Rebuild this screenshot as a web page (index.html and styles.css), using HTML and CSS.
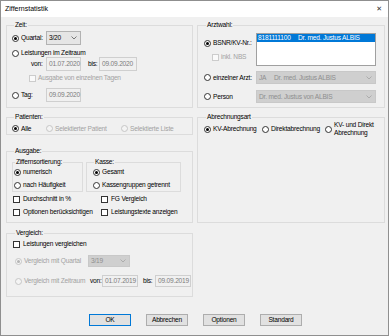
FILE: index.html
```html
<!DOCTYPE html>
<html lang="de">
<head>
    <meta charset="UTF-8">
    <title>Ziffernstatistik</title>
    <link rel="stylesheet" href="styles.css">
</head>
<body>
    <div class="window">
        <div class="titlebar">
            <span class="title">Ziffernstatistik</span>
            <span class="close">✕</span>
        </div>
        <div class="content">
            <div class="panels">
                <!-- Zeit -->
                <fieldset class="group zeit">
                    <legend>Zeit:</legend>
                    <div class="row r-quartal">
                        <span class="radio on"></span>
                        <span class="lbl w-quartal">Quartal:</span>
                        <span class="combo c-quartal">3/20<svg class="chev" width="6" height="4" viewBox="0 0 6 4"><polyline points="0.5,0.5 3,3 5.5,0.5" fill="none" stroke="#6a6a6a" stroke-width="0.9"/></svg></span>
                    </div>
                    <div class="row r-leist">
                        <span class="radio"></span>
                        <span class="lbl">Leistungen im Zeitraum</span>
                    </div>
                    <div class="row r-von">
                        <span class="lbl w-von">von:</span>
                        <span class="field f-von">01.07.2020</span>
                        <span class="lbl w-bis">bis:</span>
                        <span class="field f-bis">09.09.2020</span>
                    </div>
                    <div class="row r-tage">
                        <span class="check off"></span>
                        <span class="lbl dim">Ausgabe von einzelnen Tagen</span>
                    </div>
                    <div class="row r-tag">
                        <span class="radio"></span>
                        <span class="lbl w-quartal">Tag:</span>
                        <span class="field f-von">09.09.2020</span>
                    </div>
                </fieldset>

                <!-- Arztwahl -->
                <fieldset class="group arzt">
                    <legend>Arztwahl:</legend>
                    <div class="arzt-top">
                        <div class="arzt-left">
                            <div class="row r-bsnr">
                                <span class="radio on"></span>
                                <span class="lbl">BSNR/KV-Nr.:</span>
                            </div>
                            <div class="row r-nbs">
                                <span class="check off"></span>
                                <span class="lbl dim">inkl. NBS</span>
                            </div>
                        </div>
                        <div class="listbox">
                            <div class="list-item selected"><span class="nr">8181111100</span>Dr. med. Justus ALBIS</div>
                        </div>
                    </div>
                    <div class="row r-einzel">
                        <span class="radio"></span>
                        <span class="lbl w-arzt">einzelner Arzt:</span>
                        <span class="combo wide off"><span><span class="kz">JA</span>Dr. med. Justus ALBIS</span><svg class="chev" width="6" height="4" viewBox="0 0 6 4"><polyline points="0.5,0.5 3,3 5.5,0.5" fill="none" stroke="#a8a8a8" stroke-width="0.9"/></svg></span>
                    </div>
                    <div class="row r-person">
                        <span class="radio"></span>
                        <span class="lbl w-arzt">Person</span>
                        <span class="combo wide off">Dr. med. Justus von ALBIS<svg class="chev" width="6" height="4" viewBox="0 0 6 4"><polyline points="0.5,0.5 3,3 5.5,0.5" fill="none" stroke="#a8a8a8" stroke-width="0.9"/></svg></span>
                    </div>
                </fieldset>

                <div class="stack">
                    <!-- Patienten -->
                    <fieldset class="group patienten">
                        <legend>Patienten:</legend>
                        <div class="row r-pat">
                            <span class="radio on"></span>
                            <span class="lbl w-alle">Alle</span>
                            <span class="radio off"></span>
                            <span class="lbl dim w-selpat">Selektierter Patient</span>
                            <span class="radio off"></span>
                            <span class="lbl dim">Selektierte Liste</span>
                        </div>
                    </fieldset>

                    <!-- Ausgabe -->
                    <fieldset class="group ausgabe">
                        <legend>Ausgabe:</legend>
                        <div class="sub-row">
                            <fieldset class="group sub sort">
                                <legend>Ziffernsortierung:</legend>
                                <div class="row r-opt">
                                    <span class="radio on"></span>
                                    <span class="lbl">numerisch</span>
                                </div>
                                <div class="row r-opt2">
                                    <span class="radio"></span>
                                    <span class="lbl">nach Häufigkeit</span>
                                </div>
                            </fieldset>
                            <fieldset class="group sub kasse">
                                <legend>Kasse:</legend>
                                <div class="row r-opt">
                                    <span class="radio on"></span>
                                    <span class="lbl">Gesamt</span>
                                </div>
                                <div class="row r-opt2">
                                    <span class="radio"></span>
                                    <span class="lbl">Kassengruppen getrennt</span>
                                </div>
                            </fieldset>
                        </div>
                        <div class="checks">
                            <div class="row"><span class="check"></span><span class="lbl">Durchschnitt in %</span></div>
                            <div class="row"><span class="check"></span><span class="lbl">FG Vergleich</span></div>
                            <div class="row"><span class="check"></span><span class="lbl">Optionen berücksichtigen</span></div>
                            <div class="row"><span class="check"></span><span class="lbl">Leistungstexte anzeigen</span></div>
                        </div>
                    </fieldset>
                </div>

                <!-- Abrechnungsart -->
                <fieldset class="group abrechnung">
                    <legend>Abrechnungsart</legend>
                    <div class="row r-abr">
                        <span class="radio on"></span>
                        <span class="lbl w-kv">KV-Abrechnung</span>
                        <span class="radio"></span>
                        <span class="lbl w-direkt">Direktabrechnung</span>
                        <span class="radio"></span>
                        <span class="lbl two-line">KV- und Direkt<br>Abrechnung</span>
                    </div>
                </fieldset>

                <!-- Vergleich -->
                <fieldset class="group vergleich">
                    <legend>Vergleich:</legend>
                    <div class="row r-vgl">
                        <span class="check"></span>
                        <span class="lbl">Leistungen vergleichen</span>
                    </div>
                    <div class="row r-vquartal">
                        <span class="radio on off"></span>
                        <span class="lbl dim w-vquartal">Vergleich mit Quartal</span>
                        <span class="combo c-vquartal off">3/19<svg class="chev" width="6" height="4" viewBox="0 0 6 4"><polyline points="0.5,0.5 3,3 5.5,0.5" fill="none" stroke="#a8a8a8" stroke-width="0.9"/></svg></span>
                    </div>
                    <div class="row r-vzeit">
                        <span class="radio off"></span>
                        <span class="lbl dim w-vzeit">Vergleich mit Zeitraum</span>
                        <span class="lbl w-vvon">von:</span>
                        <span class="field f-vvon">01.07.2019</span>
                        <span class="lbl w-vbis">bis:</span>
                        <span class="field f-vbis">09.09.2019</span>
                    </div>
                </fieldset>
            </div>

            <div class="buttons">
                <button class="btn default">OK</button>
                <button class="btn">Abbrechen</button>
                <button class="btn">Optionen</button>
                <button class="btn">Standard</button>
            </div>
        </div>
    </div>
</body>
</html>
```

FILE: styles.css
```css
* {
    box-sizing: border-box;
}

body {
    margin: 0;
    background: #ffffff;
    font-family: "Liberation Sans", Arial, sans-serif;
    font-size: 6.6px;
    letter-spacing: -0.2px;
    line-height: 8px;
    color: #000;
}

.window {
    width: 389px;
    height: 336px;
    border: 1px solid #8f8f8f;
    background: #f0f0f0;
    display: flex;
    flex-direction: column;
}

.titlebar {
    height: 16px;
    background: #fff;
    display: flex;
    align-items: center;
    justify-content: space-between;
    padding: 0 6px 0 4px;
}

.title {
    font-size: 7px;
    letter-spacing: 0;
}

.close {
    font-family: "DejaVu Sans", sans-serif;
    font-size: 7px;
    color: #333;
}

.content {
    flex: 1;
    padding: 4px 3px 0 5px;
}

.panels {
    display: grid;
    grid-template-columns: 187px 188px;
    column-gap: 4px;
    row-gap: 5px;
}

/* group boxes */
.group {
    margin: 0;
    padding: 0;
    border: 1px solid #dcdcdc;
    min-width: 0;
}

.group legend {
    padding: 0 1px;
    margin-left: 2px;
    line-height: 8px;
}

.row {
    display: flex;
    align-items: center;
    height: 8px;
    white-space: nowrap;
}

.lbl {
    margin-left: 2px;
}

.dim {
    color: #a2a2a2;
}

/* radio + check */
.radio {
    width: 7px;
    height: 7px;
    border: 1px solid #333;
    border-radius: 50%;
    background: #fff;
    flex: none;
    display: flex;
    align-items: center;
    justify-content: center;
}

.radio.on::after {
    content: "";
    width: 3px;
    height: 3px;
    border-radius: 50%;
    background: #000;
}

.radio.off {
    border-color: #c6c6c6;
    background: #f4f4f4;
}

.radio.on.off::after {
    background: #b4b4b4;
}

.check {
    width: 7px;
    height: 7px;
    border: 1px solid #333;
    background: #fff;
    flex: none;
}

.check.off {
    border-color: #cccccc;
    background: #fafafa;
}

/* inputs */
.field {
    height: 14px;
    border: 1px solid #cfcfcf;
    background: #f0f0f0;
    color: #7c7c7c;
    display: flex;
    align-items: center;
    padding-left: 2px;
    flex: none;
}

.combo {
    height: 14px;
    border: 1px solid #b2b2b2;
    background: #e5e5e5;
    display: flex;
    align-items: center;
    justify-content: space-between;
    padding: 0 3px 0 2px;
    flex: none;
}

.combo.off {
    border-color: #c8c8c8;
    background: #cfcfcf;
    color: #8e8e8e;
}

/* Zeit */
.zeit {
    padding: 2px 0 5px 5px;
}

.r-quartal,
.r-von,
.r-tag {
    height: 14px;
}

.w-quartal {
    width: 25px;
}

.c-quartal {
    width: 35px;
}

.r-leist {
    margin-top: 4px;
}

.r-von {
    padding-left: 19px;
}

.w-von {
    margin-left: 0;
    width: 15px;
}

.f-von {
    width: 35px;
}

.w-bis {
    margin-left: 7px;
    width: 11px;
}

.f-bis {
    width: 38px;
}

.r-tage {
    margin-top: 3px;
    padding-left: 17px;
}

.r-tag {
    margin-top: 6px;
}

/* Arztwahl */
.arzt {
    padding: 0 8px 4px 6px;
}

.arzt-top {
    display: flex;
    justify-content: space-between;
}

.r-bsnr {
    margin-top: 10px;
}

.r-nbs {
    margin-top: 6px;
    padding-left: 8px;
}

.listbox {
    margin-top: 4px;
    width: 120px;
    height: 33px;
    border: 1px solid #a0a0a0;
    background: #fff;
}

.list-item {
    height: 8px;
    white-space: nowrap;
    padding-left: 1px;
}

.list-item.selected {
    background: #0078d7;
    color: #fff;
}

.nr {
    display: inline-block;
    width: 40px;
}

.r-einzel,
.r-person {
    height: 13px;
}

.r-einzel {
    margin-top: 5px;
}

.r-person {
    margin-top: 6px;
}

.w-arzt {
    width: 43px;
}

.combo.wide {
    width: 120px;
    height: 13px;
}

.kz {
    display: inline-block;
    width: 15px;
}

/* left stack */
.stack {
    display: flex;
    flex-direction: column;
}

.patienten {
    padding: 3px 0 1px 5px;
}

.r-pat {
    height: 9px;
}

.w-alle {
    width: 25px;
}

.w-selpat {
    width: 66px;
}

.ausgabe {
    margin-top: 12px;
    padding: 3px 0 6px 5px;
}

.sub-row {
    display: flex;
    gap: 3px;
}

.sub {
    padding: 2px 0 2px 1px;
}

.sub legend {
    margin-left: 1px;
}

.sort {
    width: 71px;
}

.kasse {
    width: 95px;
    padding-left: 6px;
}

.r-opt2 {
    margin-top: 5px;
}

.checks {
    display: grid;
    grid-template-columns: 88px auto;
    row-gap: 5px;
    margin-top: 3px;
    padding-left: 1px;
}

.checks .lbl {
    margin-left: 3px;
}

/* Abrechnungsart */
.abrechnung {
    padding: 0 0 0 6px;
}

.r-abr {
    height: 16px;
}

.w-kv {
    width: 49px;
}

.w-direkt {
    width: 54px;
}

.two-line {
    line-height: 8px;
}

/* Vergleich */
.vergleich {
    grid-column: 1;
    margin-top: 1px;
    padding: 3px 0 9px 6px;
}

.r-vgl .lbl {
    margin-left: 3px;
}

.r-vquartal,
.r-vzeit {
    height: 12px;
    padding-left: 2px;
}

.r-vquartal {
    margin-top: 7px;
}

.r-vzeit {
    margin-top: 8px;
}

.w-vquartal {
    width: 64px;
}

.c-vquartal {
    width: 42px;
    height: 12px;
}

.w-vzeit {
    width: 66px;
}

.w-vvon {
    margin-left: 0;
    width: 12px;
}

.f-vvon {
    width: 36px;
    height: 12px;
}

.w-vbis {
    margin-left: 5px;
    width: 12px;
}

.f-vbis {
    width: 36px;
    height: 12px;
}

/* buttons */
.buttons {
    display: flex;
    justify-content: center;
    gap: 15px;
    margin-top: 17px;
}

.btn {
    width: 42px;
    height: 12px;
    padding: 0;
    border: 1px solid #adadad;
    background: #e1e1e1;
    font-family: inherit;
    font-size: 6.6px;
    letter-spacing: -0.2px;
    line-height: 8px;
    color: #000;
}

.btn.default {
    border-color: #0078d7;
}
```
